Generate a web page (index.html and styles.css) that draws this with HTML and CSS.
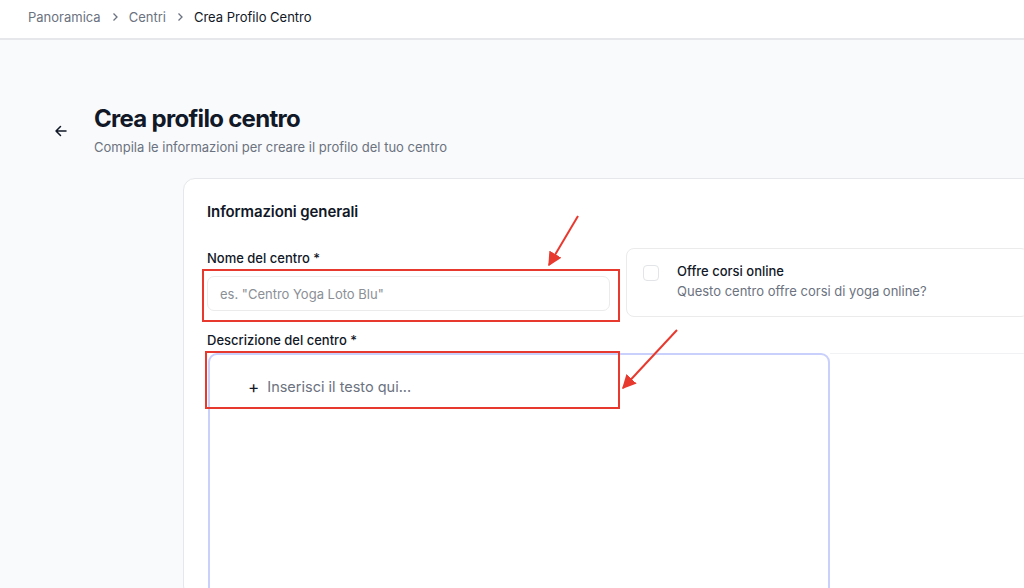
FILE: index.html
```html
<!DOCTYPE html>
<html lang="it">
<head>
    <meta charset="UTF-8">
    <meta name="viewport" content="width=device-width, initial-scale=1.0">
    <title>Crea Profilo Centro</title>
    <link rel="stylesheet" href="styles.css">
</head>
<body>
    <div class="topbar">
        <nav class="breadcrumb">
            <a href="#">Panoramica</a>
            <svg class="chev" viewBox="0 0 12 12"><path d="M4.5 2.5 8 6l-3.5 3.5"/></svg>
            <a href="#">Centri</a>
            <svg class="chev" viewBox="0 0 12 12"><path d="M4.5 2.5 8 6l-3.5 3.5"/></svg>
            <span class="current">Crea Profilo Centro</span>
        </nav>
    </div>

    <div class="page">
        <div class="page-head">
            <a href="#" class="back">
                <svg viewBox="0 0 14 14"><path d="M12 7H2M6.5 2.5 2 7l4.5 4.5"/></svg>
            </a>
            <div>
                <h1>Crea profilo centro</h1>
                <p class="subtitle">Compila le informazioni per creare il profilo del tuo centro</p>
            </div>
        </div>

        <div class="card">
            <h2>Informazioni generali</h2>

            <div class="form-row">
                <div class="field">
                    <label for="name">Nome del centro *</label>
                    <input type="text" id="name" placeholder='es. "Centro Yoga Loto Blu"'>
                </div>
                <label class="check-card">
                    <span class="checkbox"></span>
                    <span>
                        <span class="check-title">Offre corsi online</span>
                        <span class="check-desc">Questo centro offre corsi di yoga online?</span>
                    </span>
                </label>
            </div>

            <div class="field desc-field">
                <label>Descrizione del centro *</label>
                <div class="editor-row">
                    <div class="editor">
                        <div class="editor-line">
                            <span class="plus">+</span>
                            <span class="editor-ph">Inserisci il testo qui...</span>
                        </div>
                    </div>
                    <div class="editor-side"></div>
                </div>
            </div>
        </div>

        <!-- annotazioni -->
        <svg class="notes" viewBox="0 0 1024 588">
            <defs>
                <marker id="head" viewBox="0 0 10 10" refX="9" refY="5" markerWidth="7" markerHeight="7" orient="auto">
                    <path d="M0 0 10 5 0 10z" fill="#e8392f"/>
                </marker>
            </defs>
            <rect x="203" y="270" width="416" height="51"/>
            <rect x="206" y="352" width="413" height="56"/>
            <line x1="578" y1="216" x2="549" y2="265" marker-end="url(#head)"/>
            <line x1="677" y1="330" x2="623" y2="388" marker-end="url(#head)"/>
        </svg>
    </div>
</body>
</html>
```

FILE: styles.css
```css
* {
    box-sizing: border-box;
}

body {
    font-family: Inter, "Noto Sans", sans-serif;
    margin: 0;
    padding: 0;
    background: #f9fafb;
    color: #111827;
    height: 588px;
    overflow: hidden;
}

.topbar {
    height: 40px;
    background: #fff;
    border-bottom: 2px solid #e5e7eb;
    display: flex;
    align-items: center;
    padding-left: 28px;
}

.breadcrumb {
    display: flex;
    align-items: center;
    gap: 8px;
    font-size: 13px;
    margin-top: -4px;
}

.breadcrumb a {
    color: #6b7280;
    text-decoration: none;
}

.breadcrumb .current {
    color: #111827;
}

.chev {
    width: 12px;
    height: 12px;
    fill: none;
    stroke: #6b7280;
    stroke-width: 1.3;
}

.page {
    position: relative;
    height: 548px;
}

.page-head {
    display: flex;
    padding: 63px 0 0 54px;
}

.back {
    width: 14px;
    height: 14px;
    margin: 19px 26px 0 0;
    display: block;
}

.back svg {
    width: 14px;
    height: 14px;
    fill: none;
    stroke: #111827;
    stroke-width: 1.5;
    stroke-linecap: round;
    stroke-linejoin: round;
}

h1 {
    margin: 0;
    font-size: 24px;
    line-height: 32px;
    font-weight: 700;
    letter-spacing: -0.7px;
}

.subtitle {
    margin: 2px 0 0;
    font-size: 13px;
    line-height: 20px;
    color: #6b7280;
}

.card {
    margin: 21px 0 0 183px;
    width: 870px;
    height: 420px;
    background: #fff;
    border: 1px solid #e5e7eb;
    border-radius: 12px;
    padding: 21px 23px;
}

.card h2 {
    margin: 0;
    font-size: 15px;
    line-height: 24px;
    font-weight: 600;
    letter-spacing: -0.1px;
}

.form-row {
    display: grid;
    grid-template-columns: 403px 1fr;
    gap: 16px;
    margin-top: 24px;
    align-items: start;
}

.field label {
    display: block;
    font-size: 13px;
    line-height: 20px;
    font-weight: 500;
    margin-bottom: 8px;
}

.field input {
    width: 100%;
    height: 35px;
    border: 1px solid #ebebeb;
    border-radius: 7px;
    padding: 0 12px;
    font-family: inherit;
    font-size: 13px;
    color: #111827;
    background: #fff;
}

.field input::placeholder {
    color: #8b8f96;
}

.check-card {
    display: flex;
    gap: 18px;
    border: 1px solid #ebebeb;
    border-radius: 8px;
    padding: 12px 16px 14px;
    height: 69px;
    cursor: pointer;
}

.checkbox {
    width: 16px;
    height: 16px;
    border: 1px solid #e2e4e8;
    border-radius: 4px;
    margin-top: 4px;
    flex-shrink: 0;
}

.check-title {
    display: block;
    font-size: 13px;
    line-height: 20px;
    font-weight: 500;
}

.check-desc {
    display: block;
    font-size: 13px;
    line-height: 21px;
    color: #6b7280;
}

.desc-field {
    margin-top: 13px;
}

.desc-field label {
    margin-bottom: 3px;
}

.editor-row {
    display: flex;
}

.editor {
    width: 622px;
    height: 260px;
    margin-left: 1px;
    border: 2px solid #c9d0fb;
    border-radius: 9px;
    padding: 20px 38px;
}

.editor-line {
    display: flex;
    align-items: center;
    gap: 8px;
    font-size: 14.5px;
    line-height: 24px;
}

.plus {
    color: #111827;
    font-size: 17px;
}

.editor-ph {
    color: #6b7280;
}

.editor-side {
    flex: 1;
    border-top: 1px solid #f1f2f4;
}

.notes {
    position: absolute;
    left: 0;
    top: -40px;
    width: 1024px;
    height: 588px;
    pointer-events: none;
}

.notes rect {
    fill: none;
    stroke: #e8392f;
    stroke-width: 2;
}

.notes line {
    stroke: #e8392f;
    stroke-width: 2;
}
```
